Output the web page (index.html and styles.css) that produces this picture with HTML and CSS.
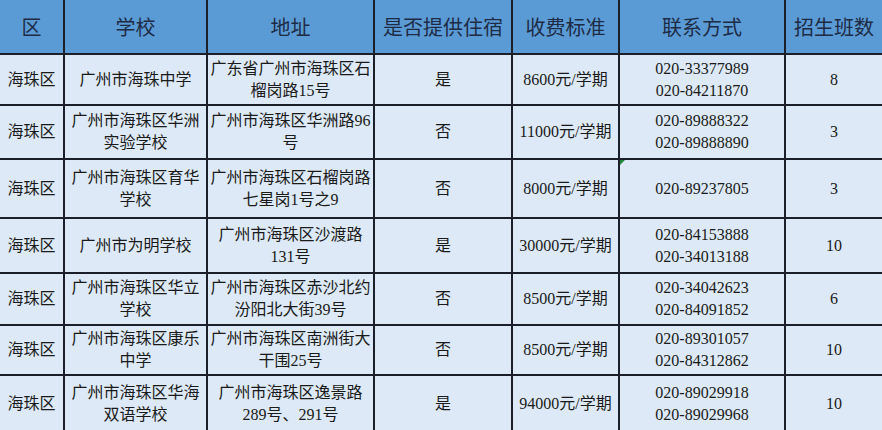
FILE: index.html
```html
<!DOCTYPE html>
<html lang="zh-CN">
<head>
<meta charset="utf-8">
<title>海珠区学校</title>
<link rel="stylesheet" href="styles.css">
</head>
<body>
<div class="sheet">
  <div class="hd">区</div><div class="hd">学校</div><div class="hd">地址</div><div class="hd">是否提供住宿</div><div class="hd">收费标准</div><div class="hd">联系方式</div><div class="hd">招生班数</div>

  <div class="c">海珠区</div><div class="c">广州市海珠中学</div><div class="c">广东省广州市海珠区石榴岗路15号</div><div class="c">是</div><div class="c">8600元/学期</div><div class="c">020-33377989<br>020-84211870</div><div class="c">8</div>

  <div class="c">海珠区</div><div class="c">广州市海珠区华洲实验学校</div><div class="c">广州市海珠区华洲路96号</div><div class="c">否</div><div class="c">11000元/学期</div><div class="c">020-89888322<br>020-89888890</div><div class="c">3</div>

  <div class="c">海珠区</div><div class="c">广州市海珠区育华学校</div><div class="c">广州市海珠区石榴岗路七星岗1号之9</div><div class="c">否</div><div class="c">8000元/学期</div><div class="c mark">020-89237805</div><div class="c">3</div>

  <div class="c">海珠区</div><div class="c">广州市为明学校</div><div class="c">广州市海珠区沙渡路131号</div><div class="c">是</div><div class="c">30000元/学期</div><div class="c">020-84153888<br>020-34013188</div><div class="c">10</div>

  <div class="c">海珠区</div><div class="c">广州市海珠区华立学校</div><div class="c">广州市海珠区赤沙北约汾阳北大街39号</div><div class="c">否</div><div class="c">8500元/学期</div><div class="c">020-34042623<br>020-84091852</div><div class="c">6</div>

  <div class="c">海珠区</div><div class="c">广州市海珠区康乐中学</div><div class="c">广州市海珠区南洲街大干围25号</div><div class="c">否</div><div class="c">8500元/学期</div><div class="c">020-89301057<br>020-84312862</div><div class="c">10</div>

  <div class="c">海珠区</div><div class="c">广州市海珠区华海双语学校</div><div class="c">广州市海珠区逸景路289号、291号</div><div class="c">是</div><div class="c">94000元/学期</div><div class="c">020-89029918<br>020-89029968</div><div class="c">10</div>
</div>
</body>
</html>
```

FILE: styles.css
```css
html, body {
  margin: 0;
  padding: 0;
  width: 882px;
  height: 430px;
  overflow: hidden;
  background: #dde9f6;
}

.sheet {
  display: grid;
  grid-template-columns: 63px 141px 165px 136px 105px 164px 96px;
  grid-template-rows: 53px 49px 52px 57px 53px 50px 48px 56px;
  gap: 2px;
  background: #1b1f2a;
  width: 882px;
}

.hd, .c {
  display: flex;
  align-items: center;
  justify-content: center;
  text-align: center;
  padding: 0 2px;
  box-sizing: border-box;
}

.hd {
  background: #5b9bd5;
  color: #1d2b45;
  font-family: "Noto Sans CJK SC", "Noto Sans", sans-serif;
  font-size: 20px;
}

.c {
  background: #dde9f6;
  color: #1a1a1a;
  font-family: "Liberation Serif", "Noto Sans CJK SC", serif;
  font-size: 16px;
  line-height: 22px;
}

.mark {
  position: relative;
}

.mark::before {
  content: "";
  position: absolute;
  left: 0;
  top: 0;
  width: 0;
  height: 0;
  border-top: 5px solid #1f8a3a;
  border-right: 5px solid transparent;
}
```
